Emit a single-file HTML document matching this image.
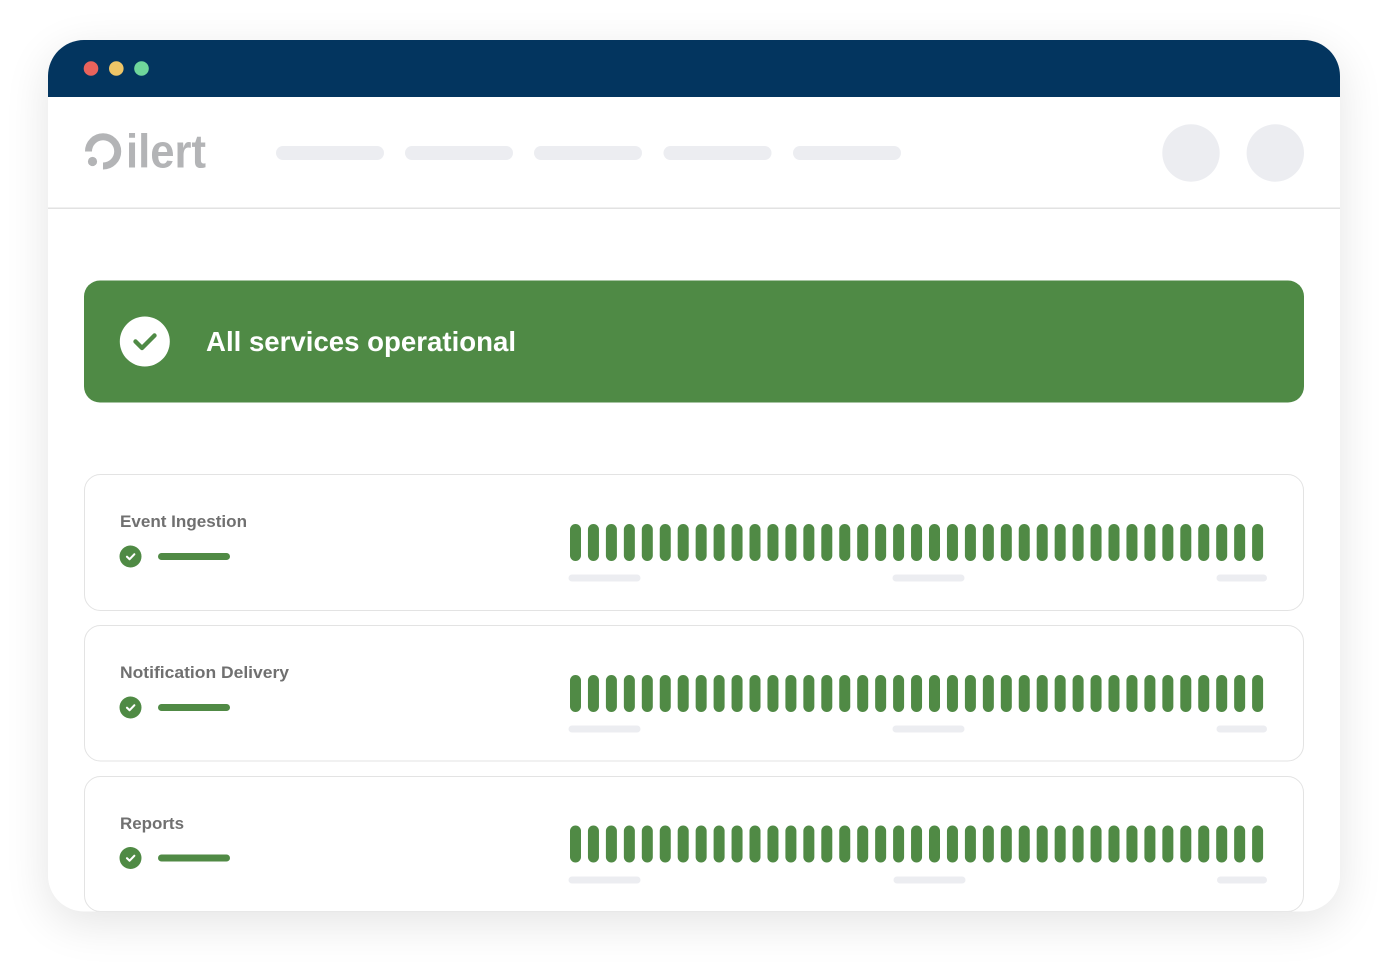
<!DOCTYPE html>
<html lang="en"><head><meta charset="utf-8"><title>ilert status page</title>
<style>
html,body{margin:0;padding:0;width:1388px;height:976px;background:#fff;overflow:hidden}
#win{position:absolute;left:48px;top:40px;width:1292px;height:871px;border-radius:36px;box-shadow:0 12px 45px rgba(0,0,0,.11);background:#fff}
svg{position:absolute;left:0;top:0}
text{font-family:"Liberation Sans",sans-serif}
</style></head><body>
<div id="win"></div>
<svg width="1388" height="976" viewBox="0 0 1388 976" xmlns="http://www.w3.org/2000/svg">
<defs>
<clipPath id="wc"><rect x="48" y="40" width="1292" height="871.5" rx="36"/></clipPath>
<clipPath id="bc"><rect x="0" y="0" width="1388" height="911.5"/></clipPath>
<g id="bars" fill="#508a45">
<rect x="570" width="11" height="37" rx="5.5"/><rect x="587.95" width="11" height="37" rx="5.5"/><rect x="605.9" width="11" height="37" rx="5.5"/><rect x="623.85" width="11" height="37" rx="5.5"/><rect x="641.8" width="11" height="37" rx="5.5"/><rect x="659.75" width="11" height="37" rx="5.5"/><rect x="677.7" width="11" height="37" rx="5.5"/><rect x="695.65" width="11" height="37" rx="5.5"/><rect x="713.6" width="11" height="37" rx="5.5"/><rect x="731.55" width="11" height="37" rx="5.5"/><rect x="749.5" width="11" height="37" rx="5.5"/><rect x="767.45" width="11" height="37" rx="5.5"/><rect x="785.4" width="11" height="37" rx="5.5"/><rect x="803.35" width="11" height="37" rx="5.5"/><rect x="821.3" width="11" height="37" rx="5.5"/><rect x="839.25" width="11" height="37" rx="5.5"/><rect x="857.2" width="11" height="37" rx="5.5"/><rect x="875.15" width="11" height="37" rx="5.5"/><rect x="893.1" width="11" height="37" rx="5.5"/><rect x="911.05" width="11" height="37" rx="5.5"/><rect x="929" width="11" height="37" rx="5.5"/><rect x="946.95" width="11" height="37" rx="5.5"/><rect x="964.9" width="11" height="37" rx="5.5"/><rect x="982.85" width="11" height="37" rx="5.5"/><rect x="1000.8" width="11" height="37" rx="5.5"/><rect x="1018.75" width="11" height="37" rx="5.5"/><rect x="1036.7" width="11" height="37" rx="5.5"/><rect x="1054.65" width="11" height="37" rx="5.5"/><rect x="1072.6" width="11" height="37" rx="5.5"/><rect x="1090.55" width="11" height="37" rx="5.5"/><rect x="1108.5" width="11" height="37" rx="5.5"/><rect x="1126.45" width="11" height="37" rx="5.5"/><rect x="1144.4" width="11" height="37" rx="5.5"/><rect x="1162.35" width="11" height="37" rx="5.5"/><rect x="1180.3" width="11" height="37" rx="5.5"/><rect x="1198.25" width="11" height="37" rx="5.5"/><rect x="1216.2" width="11" height="37" rx="5.5"/><rect x="1234.15" width="11" height="37" rx="5.5"/><rect x="1252.1" width="11" height="37" rx="5.5"/>
</g>
<g id="stat">
<circle cx="130.5" cy="0" r="11" fill="#4f8a44"/>
<path d="M127 0.2 L129.6 2.7 L134.3 -2.2" fill="none" stroke="#fff" stroke-width="2.1" stroke-linecap="round" stroke-linejoin="round"/>
<rect x="158" y="-3.5" width="72" height="7" rx="3.5" fill="#508a45"/>
</g>
</defs>
<g clip-path="url(#wc)">
<rect x="48" y="40" width="1292" height="872" fill="#fff"/>
<rect x="48" y="40" width="1292" height="57" fill="#03355f"/>
<rect x="48" y="207.5" width="1292" height="1.5" fill="#e2e2e2"/>
</g>
<circle cx="91" cy="68.5" r="7.3" fill="#e9635c"/>
<circle cx="116.3" cy="68.5" r="7.3" fill="#eec567"/>
<circle cx="141.5" cy="68.5" r="7.3" fill="#6fd69b"/>

<path d="M88.5 151.5 A14.6 14.6 0 1 1 103 166" fill="none" stroke="#b3b4b6" stroke-width="7"/>
<circle cx="92.5" cy="161.5" r="4.6" fill="#b3b4b6"/>
<text x="126" y="167.5" font-size="47" font-weight="700" fill="#b3b4b6" textLength="80" lengthAdjust="spacingAndGlyphs">ilert</text>

<g fill="#ecedf1">
<rect x="276" y="146" width="108" height="14" rx="7"/>
<rect x="405" y="146" width="108" height="14" rx="7"/>
<rect x="534" y="146" width="108" height="14" rx="7"/>
<rect x="663.5" y="146" width="108" height="14" rx="7"/>
<rect x="793" y="146" width="108" height="14" rx="7"/>
<circle cx="1191" cy="153" r="28.7"/>
<circle cx="1275.3" cy="153" r="28.7"/>
</g>

<rect x="84" y="280.5" width="1220" height="122" rx="16" fill="#4f8a45"/>
<circle cx="144.8" cy="341.5" r="25" fill="#fff"/>
<path d="M135.5 341.5 L142 348 L154.5 335.5" fill="none" stroke="#4f8a45" stroke-width="4.4" stroke-linecap="round" stroke-linejoin="round"/>
<text x="206" y="351" font-size="28" font-weight="700" fill="#fff" textLength="310" lengthAdjust="spacingAndGlyphs">All services operational</text>

<g clip-path="url(#bc)" fill="#fff" stroke="#e3e3e3" stroke-width="1">
<rect x="84.5" y="474.5" width="1219" height="136" rx="16"/>
<rect x="84.5" y="625.5" width="1219" height="135.5" rx="16"/>
<rect x="84.5" y="776.5" width="1219" height="135" rx="16"/>
</g>

<g font-size="17" font-weight="700" fill="#707070">
<text x="120" y="527" textLength="127" lengthAdjust="spacingAndGlyphs">Event Ingestion</text>
<text x="120" y="678" textLength="169" lengthAdjust="spacingAndGlyphs">Notification Delivery</text>
<text x="120" y="829" textLength="64" lengthAdjust="spacingAndGlyphs">Reports</text>
</g>

<use href="#stat" y="556.5"/>
<use href="#stat" y="707.5"/>
<use href="#stat" y="858"/>

<use href="#bars" y="524"/>
<use href="#bars" y="675"/>
<use href="#bars" y="825.5"/>

<g fill="#ecedf1">
<rect x="568.5" y="574.5" width="72" height="7" rx="3.5"/><rect x="892.5" y="574.5" width="72" height="7" rx="3.5"/><rect x="1216.5" y="574.5" width="50.5" height="7" rx="3.5"/>
<rect x="568.5" y="725.5" width="72" height="7" rx="3.5"/><rect x="892.5" y="725.5" width="72" height="7" rx="3.5"/><rect x="1216.5" y="725.5" width="50.5" height="7" rx="3.5"/>
<rect x="568.5" y="876.5" width="72" height="7" rx="3.5"/><rect x="893.5" y="876.5" width="72" height="7" rx="3.5"/><rect x="1217" y="876.5" width="50" height="7" rx="3.5"/>
</g>
</svg>
</body></html>
